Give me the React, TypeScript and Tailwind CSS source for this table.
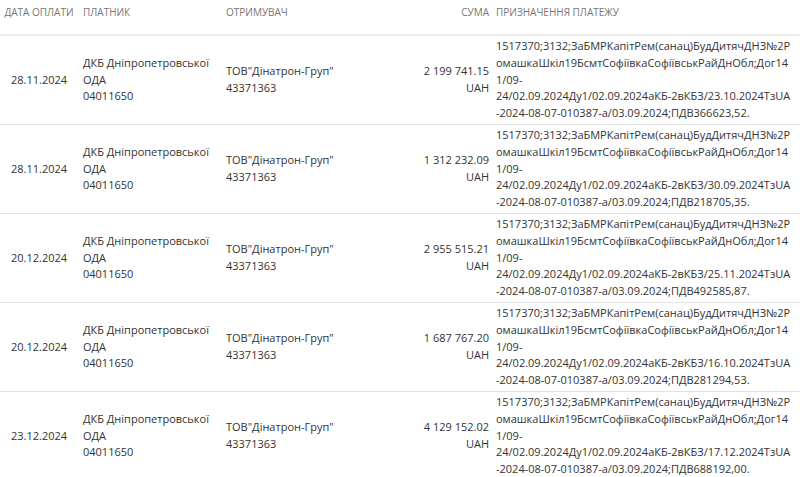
import React from "react";

type Payment = {
  date: string;
  amount: string;
  actDate: string;
  vat: string;
};

const payments: Payment[] = [
  { date: "28.11.2024", amount: "2 199 741.15", actDate: "23.10.2024", vat: "366623,52" },
  { date: "28.11.2024", amount: "1 312 232.09", actDate: "30.09.2024", vat: "218705,35" },
  { date: "20.12.2024", amount: "2 955 515.21", actDate: "25.11.2024", vat: "492585,87" },
  { date: "20.12.2024", amount: "1 687 767.20", actDate: "16.10.2024", vat: "281294,53" },
  { date: "23.12.2024", amount: "4 129 152.02", actDate: "17.12.2024", vat: "688192,00" },
];

// purpose text is pre-split into the lines seen on the page
const purposeLines = (p: Payment) => [
  "1517370;3132;ЗаБМРКапітРем(санац)БудДитячДНЗ№2Р",
  "омашкаШкіл19БсмтСофіївкаСофіївськРайДнОбл;Дог14",
  "1/09-",
  `24/02.09.2024Ду1/02.09.2024аКБ-2вКБЗ/${p.actDate}ТзUA`,
  `-2024-08-07-010387-а/03.09.2024;ПДВ${p.vat}.`,
];

export default function App() {
  return (
    <div className="w-[800px] h-[477px] overflow-hidden bg-white font-['Open_Sans',sans-serif] text-[11px] leading-[16.8px] text-[#333]">
      <table className="w-[800px] table-fixed border-collapse">
        <colgroup>
          <col className="w-[78px]" />
          <col className="w-[142px]" />
          <col className="w-[185px]" />
          <col className="w-[88px]" />
          <col className="w-[307px]" />
        </colgroup>
        <thead>
          <tr className="border-b-2 border-[#ececec] text-[10px] uppercase text-[#777] h-[35px]">
            <th className="font-normal text-center align-top pt-[4px]">Дата оплати</th>
            <th className="font-normal text-left align-top pt-[4px] pl-[5px]">Платник</th>
            <th className="font-normal text-left align-top pt-[4px] pl-[6px]">Отримувач</th>
            <th className="font-normal text-right align-top pt-[4px] pr-[4px]">Сума</th>
            <th className="font-normal text-left align-top pt-[4px] pl-[3px]">Призначення платежу</th>
          </tr>
        </thead>
        <tbody>
          {payments.map((p, i) => (
            <tr key={i} className="border-b border-[#e3e3e3]">
              <td className="text-center align-middle py-[2px]">{p.date}</td>
              <td className="align-middle pl-[5px] pr-[4px] whitespace-nowrap">
                <div>ДКБ Дніпропетровської</div>
                <div>ОДА</div>
                <div>04011650</div>
              </td>
              <td className="align-middle pl-[6px] whitespace-nowrap">
                <div>ТОВ"Дінатрон-Груп"</div>
                <div>43371363</div>
              </td>
              <td className="align-middle text-right pr-[4px] whitespace-nowrap">
                <div>{p.amount}</div>
                <div>UAH</div>
              </td>
              <td className="align-middle pl-[3px] py-[2px] whitespace-nowrap">
                {purposeLines(p).map((l, j) => (
                  <div key={j}>{l}</div>
                ))}
              </td>
            </tr>
          ))}
        </tbody>
      </table>
    </div>
  );
}
